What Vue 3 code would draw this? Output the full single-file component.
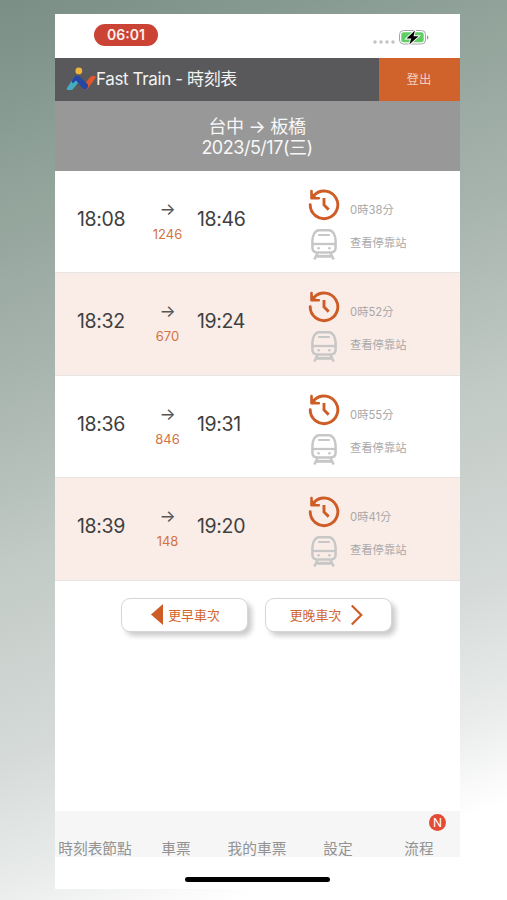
<script setup>
const trains = [
  { depart: '18:08', number: '1246', arrive: '18:46', duration: '0時38分' },
  { depart: '18:32', number: '670', arrive: '19:24', duration: '0時52分' },
  { depart: '18:36', number: '846', arrive: '19:31', duration: '0時55分' },
  { depart: '18:39', number: '148', arrive: '19:20', duration: '0時41分' },
]
const tabs = [
  { label: '時刻表節點' },
  { label: '車票' },
  { label: '我的車票' },
  { label: '設定' },
  { label: '流程', badge: 'N' },
]
</script>

<template>
  <div class="backdrop">
    <main class="phone">
      <div class="status">
        <span class="clock">06:01</span>
        <div class="indicators">
          <svg class="signal" width="22" height="4" viewBox="0 0 22 4" fill="#c3c3c5">
            <circle cx="2" cy="2" r="1.8" /><circle cx="8" cy="2" r="1.8" />
            <circle cx="14" cy="2" r="1.8" /><circle cx="20" cy="2" r="1.8" />
          </svg>
          <svg class="battery" width="31" height="17" viewBox="0 0 31 17">
            <rect x="0.500" y="1.500" width="26" height="13.500" rx="4" fill="#fff" stroke="#a4a7a5" />
            <rect x="2.300" y="3.300" width="22.400" height="10" rx="2.500" fill="#60ce65" />
            <path d="M28 6.500v4c2-.8 2-3.200 0-4z" fill="#9a9d9b" />
            <path d="M16 1.500 7.500 9.500h4.700L10.300 15.500 19.500 7.200h-5z" fill="#000" stroke="#fff" stroke-width="1.800" paint-order="stroke" />
          </svg>
        </div>
      </div>

      <header class="header">
        <svg class="logo" width="30" height="24" viewBox="0 0 30 24">
          <path d="M8.500 9.500 13.500 14 7.500 21.500Q6.500 23 4.500 23H1.500Q0 22.500 1 21z" fill="#45adc3" />
          <path d="M17.500 18.500 24.500 9.800Q25.200 9 26.500 9H29Q30.300 9.500 29.500 11L22.500 20.500Q20 24 17.500 22z" fill="#e4572c" />
          <path d="M7.500 11Q10 7 13.500 9.500L22 17.500Q22.500 21 19.500 22.500 17.800 22.600 16.500 21L10 13.500 6.800 16.500 5.500 14z" fill="#2746a3" />
          <circle cx="12.800" cy="3.900" r="3.400" fill="#eeb43b" />
        </svg>
        <h1 class="title">Fast Train - 時刻表</h1>
        <button class="logout">登出</button>
      </header>

      <section class="route">
        <div class="stations">台中 → 板橋</div>
        <div class="date">2023/5/17(三)</div>
      </section>

      <section class="trains">
        <article v-for="train in trains" :key="train.number" class="train">
          <span class="time">{{ train.depart }}</span>
          <div class="service">
            <span class="arrow">→</span>
            <span class="number">{{ train.number }}</span>
          </div>
          <span class="time">{{ train.arrive }}</span>
          <div class="details">
            <div class="detail duration">
              <svg width="32" height="32" viewBox="0 0 32 32" fill="none" stroke="#ce5c26" stroke-width="2.900" stroke-linecap="round">
                <path d="M2.200 15.800A13.800 13.800 0 1 0 6.300 6" />
                <path d="M3.500 2v7.300h7.300" stroke-linejoin="round" stroke-width="2.600" />
                <path d="M3.500 3.500v5.800h6z" fill="#ce5c26" stroke="none" />
                <path d="M16 9v7l4.700 4.600" stroke-linecap="butt" />
              </svg>
              <span>{{ train.duration }}</span>
            </div>
            <div class="detail stops">
              <svg width="32" height="32" viewBox="0 0 32 32" fill="none" stroke="#c7c7c7" stroke-width="2.500">
                <path d="M11 2.200h10c3.800 0 6.600 5 6.600 10.500v6.800q0 5-5 5H9.400q-5 0-5-5v-6.800C4.400 7.200 7.200 2.200 11 2.200z" />
                <path d="M11 7h10" stroke-width="2.200" stroke-linecap="round" />
                <path d="M4.400 16h23.200" stroke-width="2.300" />
                <path d="M9.500 25 6.300 31.500M22.500 25 25.700 31.500" />
                <path d="M8 28.300h16" stroke-width="3" />
                <circle cx="10.600" cy="20.200" r="1.300" fill="#c7c7c7" stroke="none" />
                <circle cx="21.400" cy="20.200" r="1.300" fill="#c7c7c7" stroke="none" />
              </svg>
              <span>查看停靠站</span>
            </div>
          </div>
        </article>
      </section>

      <div class="pager">
        <button class="page earlier">
          <svg width="12" height="21" viewBox="0 0 12 21"><path d="M12 0v21L0 10.500z" fill="#ce5c26" /></svg>
          <span>更早車次</span>
        </button>
        <button class="page later">
          <span>更晚車次</span>
          <svg width="13" height="22" viewBox="0 0 13 22"><path d="M1.800 1.500 11.300 11 1.800 20.500" fill="none" stroke="#ce5c26" stroke-width="2.200" /></svg>
        </button>
      </div>

      <nav class="tabs">
        <a v-for="tab in tabs" :key="tab.label" class="tab">
          {{ tab.label }}
          <span v-if="tab.badge" class="badge">{{ tab.badge }}</span>
        </a>
      </nav>
      <div class="home"><span class="home-bar"></span></div>
    </main>
  </div>
</template>

<style>
body {
  margin: 0;
}
</style>

<style scoped>
.backdrop {
  box-sizing: border-box;
  height: 900px;
  padding: 14px 47.5px 11px 54.5px;
  overflow: hidden;
  background: linear-gradient(160deg, #7a8e85 0%, #90a299 17%, #a9b5af 36%, #c1cac5 52%, #d5dad8 70%, #e9ecea 82%, #fff 91%);
  font-family: Inter, "Noto Sans CJK TC", sans-serif;
}
.phone {
  display: flex;
  flex-direction: column;
  height: 875px;
  background: #fff;
}
.status {
  display: flex;
  flex: none;
  justify-content: space-between;
  box-sizing: border-box;
  height: 44px;
  padding: 10px 29.5px 0 39.5px;
}
.clock {
  width: 64px;
  height: 22px;
  border-radius: 11px;
  background: #cb4335;
  color: #fff0ec;
  font-size: 14px;
  font-weight: 600;
  line-height: 22px;
  text-align: center;
}
.indicators {
  display: flex;
  align-items: flex-start;
  gap: 4px;
}
.signal {
  margin-top: 16px;
}
.battery {
  margin-top: 5px;
}
.header {
  display: flex;
  flex: none;
  align-items: center;
  height: 42.5px;
  padding-left: 11.5px;
  background: #59595b;
  color: #f2f2f2;
}
.logo {
  flex: none;
}
.title {
  flex: 1;
  margin: 0;
  font-size: 17px;
  font-weight: 400;
  letter-spacing: -0.38px;
  line-height: 24px;
  white-space: nowrap;
}
button {
  padding: 0;
  border: 0;
  font-family: inherit;
}
.logout {
  width: 81px;
  height: 42.5px;
  background: #d0622c;
  color: #f3d0bf;
  font-size: 12.4px;
}
.route {
  flex: none;
  box-sizing: border-box;
  height: 70.5px;
  padding-top: 15px;
  background: #989898;
  color: #f7f7f7;
  font-size: 18px;
  line-height: 21px;
  text-align: center;
}
.stations {
  letter-spacing: -0.3px;
}
.date {
  letter-spacing: -0.48px;
}
.trains {
  flex: none;
}
.train {
  display: grid;
  grid-template-columns: 68px 45px 107px 1fr;
  align-items: start;
  box-sizing: border-box;
  height: 102.4px;
  padding-left: 22.5px;
  border-bottom: 1px solid #e9e4e2;
}
.train:nth-child(even) {
  background: #faede8;
}
.time {
  padding-top: 36px;
  color: #404040;
  font-size: 19.5px;
  letter-spacing: -0.35px;
  line-height: 24px;
}
.service {
  display: flex;
  flex-direction: column;
  align-items: center;
  padding-top: 28px;
}
.arrow {
  color: #555;
  font-size: 17px;
  line-height: 20px;
}
.number {
  margin-top: 6px;
  color: #d27344;
  font-size: 13px;
  line-height: 18px;
}
.time + .details {
  padding: 17px 0 0 11px;
}
.service + .time {
  padding-left: 7px;
}
.detail {
  display: flex;
  align-items: center;
  gap: 10px;
  height: 34px;
  color: #a8a8a8;
  font-size: 11.3px;
}
.stops {
  margin-top: 5px;
}
.duration span {
  padding-top: 8px;
}
.stops span {
  margin-top: -4px;
}
.pager {
  display: flex;
  flex: none;
  gap: 17px;
  justify-content: center;
  padding: 17px 0 0;
  margin-right: 2px;
}
.page {
  display: flex;
  align-items: center;
  justify-content: center;
  box-sizing: border-box;
  width: 127px;
  height: 34px;
  border: 1px solid #d6d6d6;
  border-radius: 9px;
  background: #fff;
  box-shadow: 4px 4px 5px rgba(0, 0, 0, 0.2);
  color: #d1662f;
  font-size: 12.9px;
}
.earlier {
  gap: 5px;
  padding-left: 3px;
}
.later {
  gap: 9px;
  padding-right: 3px;
}
.tabs {
  display: grid;
  flex: none;
  grid-template-columns: repeat(5, 1fr);
  height: 46px;
  margin-top: auto;
  background: #f6f6f6;
}
.tab {
  position: relative;
  height: 19px;
  padding-top: 27px;
  color: #929292;
  font-size: 14.7px;
  line-height: 22px;
  text-align: center;
  white-space: nowrap;
}
.badge {
  position: absolute;
  top: 3px;
  right: 13.5px;
  width: 17px;
  height: 17px;
  border-radius: 50%;
  background: #e34b36;
  color: #fff;
  font-size: 12px;
  line-height: 17px;
}
.home {
  display: flex;
  flex: none;
  justify-content: center;
  height: 12px;
  padding-top: 20px;
}
.home-bar {
  width: 145px;
  height: 5px;
  border-radius: 3px;
  background: #000;
}
</style>
